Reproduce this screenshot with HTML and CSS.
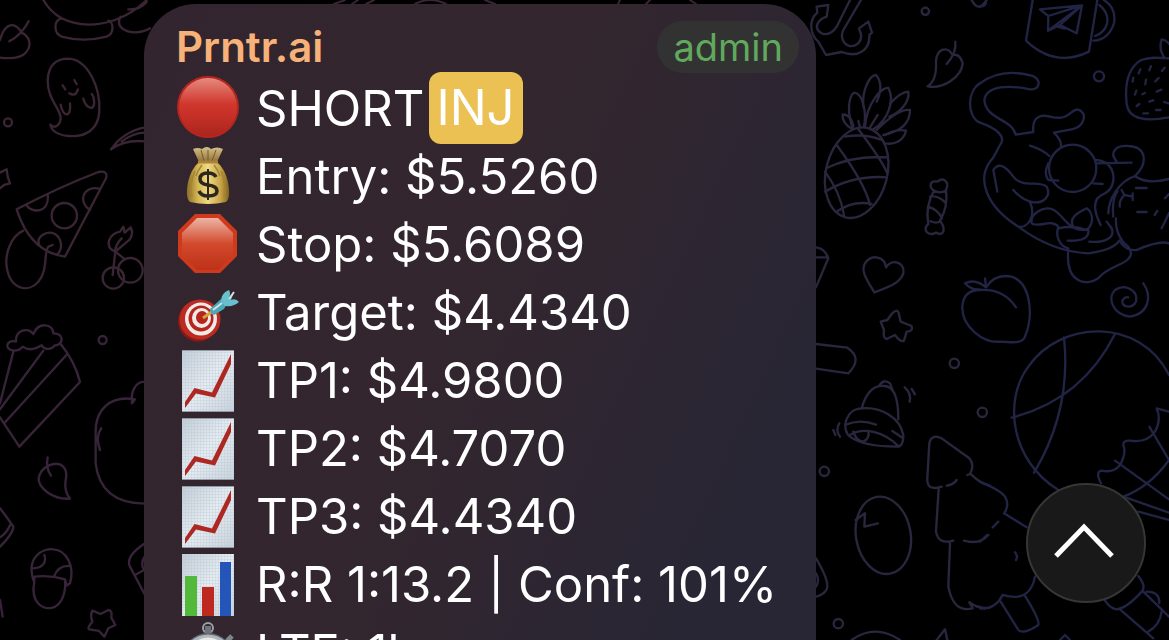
FILE: index.html
```html
<!DOCTYPE html>
<html lang="en">
<head>
  <meta charset="UTF-8" />
  <meta name="viewport" content="width=device-width, initial-scale=1.0"/>
  <title>Prntr.ai</title>
  <link rel="stylesheet" href="styles.css">
</head>
<body>

<!-- Wallpaper doodles -->
<svg class="wallpaper" viewBox="0 0 1169 640" preserveAspectRatio="xMinYMin slice" aria-hidden="true">
  <!-- left, top -->
  <g class="doodle plum" transform="scale(.3333)">
    <path d="M130 0Q150 35 185 55Q255 90 345 60Q400 40 440 0M185 55C160 60 160 100 185 110Q250 128 320 110C345 100 340 65 325 62M362 50C345 80 375 98 410 97Q435 95 450 85M385 28Q420 30 440 5"/>
    <path d="M0 120C15 65 45 65 65 98C90 110 95 135 80 155Q60 180 0 173M28 124Q65 105 86 64"/>
    <path d="M151 374C165 388 182 375 182 352C178 320 143 300 143 240C146 190 175 176 205 176C262 178 302 260 298 335C295 390 255 412 205 408C175 405 155 395 151 374ZM188 256L196 268M223 240L230 252M208 280Q226 292 234 268M182 314C188 352 215 355 210 310M250 296C258 330 292 338 280 290L275 282"/>
    <circle cx="24" cy="367" r="12"/>
    <path d="M333 448Q370 395 435 382M333 448Q375 418 435 424M365 425Q400 398 435 398"/>
    <path d="M0 518L20 508L23 530L30 550L12 555L0 565"/>
    <path d="M50 628Q180 560 295 516Q325 510 318 535L195 770Q90 755 50 628ZM78 614C95 642 150 640 143 583M300 566C245 555 235 610 270 630M119 738C105 710 140 690 165 702C185 715 190 745 172 763"/>
    <circle cx="193" cy="647" r="38"/>
    <path d="M70 692C30 710 15 765 20 800C30 870 85 880 115 845C145 810 130 760 145 740L158 735"/>
    <path d="M338 825L346 755Q320 745 328 720Q335 700 360 695L370 680L374 698L392 682Q402 700 388 720L346 755Q345 735 365 715M346 755L375 778"/>
    <circle cx="340" cy="834" r="32"/><circle cx="391" cy="811" r="37"/>
  </g>
  <!-- left, bottom -->
  <g class="doodle mauve" transform="translate(0 320) scale(.3333)">
    <path d="M42 92C10 90 20 55 48 65C45 30 85 20 100 42C115 5 160 10 160 40C195 40 190 75 165 76C150 95 130 85 125 76C95 95 75 85 68 80Q60 92 42 92ZM40 95L0 250M130 92L0 268M200 104L16 306M182 72Q225 125 240 186L58 380L0 292"/>
    <circle cx="308" cy="60" r="12"/>
    <path d="M435 185C405 185 392 215 396 250L405 238C330 225 285 270 287 340V430C295 500 335 550 435 551M304 325Q285 350 300 390"/>
    <path d="M143 412Q137 445 153 467M145 437C185 420 205 445 197 480Q192 515 210 536C160 540 115 505 116 475Q120 450 145 437"/>
    <path d="M0 565Q20 590 40 620Q40 640 0 680M32 612Q20 640 0 652"/>
    <path d="M102 785C75 710 130 685 160 688C200 690 225 740 210 790L200 797L195 778Q150 765 104 770ZM103 785C90 850 130 868 155 864C190 855 198 810 195 780M98 745C130 745 140 725 133 705M162 770Q175 735 210 738"/>
    <path d="M277 872L302 882L325 870Q338 870 334 893L346 915L325 925L313 950L297 933L268 928Q260 925 277 905Q270 885 277 872Z"/>
    <path d="M435 670Q375 710 390 740L435 825M435 708Q420 730 432 750L405 765M0 840L8 890"/>
  </g>
  <!-- thin strip above the bubble -->
  <g class="doodle strip">
    <path d="M334 4L345 0M352 4L358 0M366 4L374 0M415 4Q430 -4 446 4M485 0L495 4M620 0L618 4M650 0L646 4M690 0L696 4"/>
  </g>
  <!-- right of the bubble, top -->
  <g class="doodle violet" transform="translate(810 0) scale(.3333)">
    <path d="M120 0L80 80Q60 110 35 100C10 85 20 60 50 50L55 15L20 20L22 38C-5 60 0 105 25 125L48 165L95 156C145 175 180 150 178 105L186 98L175 65L147 85L153 103C155 130 135 140 118 138C95 130 92 105 100 90L153 0"/>
    <circle cx="346" cy="34" r="11"/>
    <path d="M485 0Q505 40 530 0"/>
    <path d="M410 192Q440 160 436 125M428 165C410 135 380 148 378 185C380 220 375 245 353 259C400 268 455 230 458 190Q450 160 428 165"/>
    <ellipse cx="140" cy="518" rx="92" ry="138" transform="rotate(14 140 518)"/>
    <path d="M130 388C110 340 115 290 132 278C160 280 170 340 162 380M160 320C155 270 180 225 198 225C220 250 210 285 200 305M165 380C170 310 215 260 235 264C255 300 235 360 190 388M240 310Q275 275 295 275C300 310 265 340 238 350M200 390Q265 325 300 330C300 370 270 395 220 405M225 405Q260 385 288 392C280 425 250 435 225 430M128 388Q95 370 98 343Q125 345 130 380M145 363L150 382M203 345L180 382"/>
    <path d="M80 435Q165 550 180 615M145 388Q215 480 232 520M45 515Q90 575 102 645M105 410Q165 400 215 420M48 505Q130 465 233 472M45 575Q130 525 230 532M80 635Q130 600 185 612"/>
    <path d="M372 572C355 560 360 540 382 545C400 530 420 545 408 570Q415 620 390 662C410 690 400 710 378 698C355 710 335 690 355 672Q345 620 372 572ZM372 572Q392 582 406 572M360 590Q385 585 406 608M355 620Q385 630 396 655M362 664Q378 672 392 664"/>
    <path d="M193 877C175 845 150 815 165 790C185 760 225 770 228 802C245 775 285 785 280 820C270 850 235 862 193 877Z"/>
    <path d="M18 742Q45 745 55 775L18 862M18 772H52"/>
  </g>
  <!-- far right, top -->
  <g class="doodle navy" transform="translate(980 0) scale(.3333)">
    <path d="M158 0L138 122Q225 205 327 155L352 0M372 0Q410 25 402 70Q385 120 340 122M358 15Q390 40 380 75Q370 100 345 108M180 28L306 16L290 100L240 75L204 92L205 48ZM205 48L306 16L240 75M204 92L306 16M232 80L255 86"/>
    <circle cx="357" cy="229" r="15"/>
    <path d="M567 175C535 172 505 170 480 182C440 210 435 265 440 310C445 360 500 365 567 352M555 175Q535 150 545 118Q560 120 567 132M476 220l5-12M508 211l5-12M546 213l8-10M458 245l2-12M496 253l2-14M526 244l10-10M465 284l4-12M487 283l8-4M530 275l14-6M470 318l8-6M508 305l12-4M490 340h14M528 330h14M553 306l12 4"/>
    <path d="M0 250C60 205 130 220 158 228C185 240 180 270 150 268C90 255 20 255 13 300C18 360 95 355 107 404L160 396C155 350 180 340 220 352C270 360 270 330 292 328C325 335 315 380 275 388L222 398Q245 420 243 440M0 250C-40 275 -40 350 0 368C50 385 80 410 60 435C45 460 45 470 30 485C-10 540 20 620 115 680Q215 755 325 760Q400 750 418 722M150 437Q190 450 208 468"/>
    <path d="M52 575L40 510C60 480 85 510 100 530C125 565 180 540 200 560C215 590 190 610 160 607Q125 600 100 570M150 607C170 650 140 685 118 680M155 670C150 640 190 620 215 627C250 640 260 690 310 690C340 690 345 640 320 625C290 640 265 655 280 680M155 670C175 685 215 655 235 680C225 710 240 740 265 745M235 685Q280 675 320 690M263 722Q330 725 325 690M328 725C380 730 405 710 395 685L380 665M265 750C255 850 320 860 355 835C385 795 450 795 453 760Q450 740 432 730Q405 695 408 655"/>
    <circle cx="278" cy="505" r="71"/>
    <path d="M205 490Q190 520 205 540L235 542M345 480C410 480 415 560 375 580C330 595 345 640 362 675M340 550L368 552M350 490L455 488M410 485C385 455 410 435 445 438C500 440 505 490 465 528C415 545 385 600 385 640M465 528Q500 555 567 537M418 722Q440 755 470 750Q540 720 567 730M400 650Q395 600 412 575M425 570L433 585L457 590M458 580V600M433 585Q415 605 420 620M468 564H500M472 636H500M524 645L532 633M555 595L567 582M545 685Q560 655 567 640"/>
    <path d="M490 850C515 885 510 940 450 950C400 945 380 895 405 870C435 850 475 870 468 905C455 930 420 920 428 900Q435 890 445 892"/>
    <path d="M-45 850Q-15 835 18 862Q45 820 95 830C155 850 160 950 135 1010C125 1035 90 1025 60 1025C10 1030 -55 980 -53 920Q-50 870 0 870Q70 865 108 922M18 862L15 835M-45 850Q-25 872 0 868"/>
    <path d="M0 20Q20 20 18 0"/>
  </g>
  <!-- right of the bubble, bottom -->
  <g class="doodle violet" transform="translate(810 320) scale(.3333)">
    <path d="M222 30L212 5L232 0L245 -18Q260 -35 266 -22L272 5L305 18Q310 35 290 35L282 62Q272 68 255 45L230 57Q218 55 222 30Z"/>
    <path d="M18 72L112 83Q160 115 115 160L18 146"/>
    <circle cx="433" cy="130" r="14"/><circle cx="517" cy="277" r="14"/><circle cx="43" cy="454" r="14"/><circle cx="85" cy="911" r="14"/>
    <path d="M155 265Q175 195 220 198Q265 195 265 298M207 198Q220 175 240 190L247 208M155 265C210 260 270 290 280 345Q280 380 262 380Q160 380 120 350C90 325 110 265 155 265M105 315Q150 295 198 314M120 345C160 320 220 335 265 378M130 335Q140 365 160 365Q180 355 175 333M247 333L275 352M284 202Q305 220 299 245M305 207L315 223M88 310Q75 330 90 350M70 330L76 345"/>
    <ellipse cx="220" cy="646" rx="82" ry="117" transform="rotate(-10 220 646)"/>
    <path d="M137 600L165 580L163 620L204 610"/>
    <path d="M395 500Q350 515 352 475L358 370Q365 340 395 355L478 415Q495 435 480 462L472 465M410 497Q430 495 440 480M386 508L378 635Q385 675 430 662M462 662Q510 675 535 645M480 460Q510 490 540 498M420 670L415 800Q430 880 488 865L478 847Q510 870 540 862"/>
    <path d="M18 715Q60 785 50 808Q40 825 18 830M18 760Q30 780 18 800M125 960Q195 910 270 960M380 960L405 928L412 960"/>
  </g>
  <!-- far right, bottom -->
  <g class="doodle navy" transform="translate(980 320) scale(.3333)">
    <path d="M235 510C90 420 70 240 145 140C240 0 480 -10 567 165M252 52Q275 270 162 458M405 42Q305 240 95 293"/>
    <path d="M363 490Q345 455 365 452Q400 460 420 435Q440 400 430 375Q430 360 450 362Q500 370 525 335Q545 300 530 265L567 275M405 422L567 538M508 320L567 420Q510 500 430 530L567 578M475 575L567 600"/>
    <path d="M0 485Q60 510 75 530Q90 555 72 580L140 622M55 605L38 622M22 645L0 665M105 697Q115 710 108 720M0 865Q45 870 68 825Q150 850 165 770M62 845L115 930Q130 945 175 915Q180 900 135 828M475 768Q500 800 485 815Q440 865 410 868Q390 865 375 842M420 868L520 955M490 815L567 890M545 875Q540 915 505 935M500 815Q540 815 538 850M240 960L255 945L270 960"/>
  </g>
</svg>

<!-- Shared chart emoji -->
<svg class="defs" aria-hidden="true">
  <defs>
    <linearGradient id="paper" x1="0" y1="0" x2="1" y2="1">
      <stop offset="0" stop-color="#c3ccd6"/><stop offset=".5" stop-color="#e6edf2"/><stop offset="1" stop-color="#c9d2db"/>
    </linearGradient>
    <pattern id="grid" width="3" height="3" patternUnits="userSpaceOnUse">
      <path d="M0 0H3M0 0V3" stroke="#b4c3cf" stroke-width=".6"/>
    </pattern>
    <symbol id="chart" viewBox="0 0 64 68">
      <path fill="url(#paper)" d="M6 4H58V66H6Z"/>
      <path fill="url(#grid)" d="M6 4H58V66H6Z"/>
      <path fill="none" stroke="#8f9aa5" d="M6 4.500H58M6 65.500H58"/>
      <path fill="#ad2822" d="M9 56L18.500 42L36 46.500L55 8V18L39 51.500L20 47.500L9 62Z"/>
    </symbol>
  </defs>
</svg>

<main class="chat">
  <article class="message">
    <header class="message-header">
      <h1 class="sender">Prntr.ai</h1>
      <span class="badge">admin</span>
    </header>

    <ul class="signal">
      <li>
        <svg class="emoji" viewBox="0 0 64 68" aria-hidden="true">
          <defs>
            <linearGradient id="red" x1="0" y1="0" x2="0" y2="1">
              <stop offset="0" stop-color="#e58a80"/><stop offset=".2" stop-color="#dc6459"/><stop offset=".45" stop-color="#cf372d"/><stop offset=".65" stop-color="#c63027"/><stop offset="1" stop-color="#a9261e"/>
            </linearGradient>
          </defs>
          <circle cx="32" cy="33" r="31" fill="#b8251d"/>
          <circle cx="32" cy="33" r="29" fill="url(#red)"/>
        </svg>
        <span>SHORT</span><mark class="ticker">INJ</mark>
      </li>
      <li>
        <svg class="emoji" viewBox="0 0 64 68" aria-hidden="true">
          <defs>
            <linearGradient id="gold" x1="0" y1="0" x2="1" y2="0">
              <stop offset="0" stop-color="#8c6d28"/><stop offset=".25" stop-color="#d3b452"/><stop offset=".5" stop-color="#efda83"/><stop offset=".8" stop-color="#c7a446"/><stop offset="1" stop-color="#80621f"/>
            </linearGradient>
            <linearGradient id="cloth" x1="0" y1="0" x2="0" y2="1">
              <stop offset="0" stop-color="#d8c289"/><stop offset="1" stop-color="#8f6f35"/>
            </linearGradient>
          </defs>
          <path fill="url(#cloth)" d="M17 7Q22 5 26 7Q31 3 35 7Q41 4 47 7L41 20H23Z"/>
          <path fill="none" stroke="#765a2b" d="M25 8L28 19M32 8V19M40 8L36 19"/>
          <path fill="url(#gold)" d="M23 20H41Q49 27 52 40Q55 56 50 60Q32 64 14 60Q9 56 12 40Q15 27 23 20Z"/>
          <path fill="none" stroke="#a48435" stroke-width="1.500" d="M19 29Q13 43 16 55M45 29Q51 43 48 55M26 23Q22 28 20 34M38 23Q42 28 44 34"/>
          <path fill="none" stroke="#a9823c" stroke-width="3" d="M22 20H42"/>
          <path fill="none" stroke="#2c261c" stroke-width="3.500" d="M40 35Q38 31 32 31Q24 31 24 37Q24 42 32 43Q41 44 41 49Q41 54 32 54Q25 54 23 49"/>
          <path stroke="#2c261c" stroke-width="2" d="M32 27V58"/>
        </svg>
        <span>Entry: $5.5260</span>
      </li>
      <li>
        <svg class="emoji" viewBox="0 0 64 68" aria-hidden="true">
          <defs>
            <linearGradient id="stop" x1="0" y1="0" x2="0" y2="1">
              <stop offset="0" stop-color="#edb3a4"/><stop offset=".5" stop-color="#d2492c"/><stop offset="1" stop-color="#bd3218"/>
            </linearGradient>
          </defs>
          <path fill="#cf3a1c" d="M19 4H44L61 21V46L44 63H19L2 46V21Z"/>
          <path fill="url(#stop)" d="M21 8H42L57 23V45L42 60H21L6 45V23Z"/>
        </svg>
        <span>Stop: $5.6089</span>
      </li>
      <li>
        <svg class="emoji" viewBox="0 0 64 68" aria-hidden="true">
          <ellipse cx="22" cy="43" rx="20" ry="20.500" fill="#8d1814"/>
          <ellipse cx="24" cy="41.500" rx="20.500" ry="20" fill="#bd2a22"/>
          <ellipse cx="25" cy="41" rx="16" ry="16.500" fill="#f0eae6"/>
          <ellipse cx="25" cy="40.500" rx="12.500" ry="13" fill="#b7241e"/>
          <ellipse cx="25.500" cy="40" rx="9.500" ry="10" fill="#f0eae6"/>
          <ellipse cx="26" cy="39.500" rx="6" ry="6.500" fill="#b7241e"/>
          <path stroke="#d0a63a" stroke-width="3" d="M27 40L37 33"/>
          <path fill="#4aa9b8" d="M34 31L45 21L53 22L48 31L38 37Q34 36 34 31Z"/>
          <path fill="#67c0cc" d="M45 23Q45 15 53 12Q55 15 53 20L58 14L55 22Q60 20 63 24Q58 29 49 28Z"/>
          <path fill="none" stroke="#d6dfe2" stroke-width="2" d="M53 21L58 14M37 32L46 25"/>
        </svg>
        <span>Target: $4.4340</span>
      </li>
      <li>
        <svg class="emoji" viewBox="0 0 64 68" aria-hidden="true"><use href="#chart"/></svg>
        <span>TP1: $4.9800</span>
      </li>
      <li>
        <svg class="emoji" viewBox="0 0 64 68" aria-hidden="true"><use href="#chart"/></svg>
        <span>TP2: $4.7070</span>
      </li>
      <li>
        <svg class="emoji" viewBox="0 0 64 68" aria-hidden="true"><use href="#chart"/></svg>
        <span>TP3: $4.4340</span>
      </li>
      <li>
        <svg class="emoji" viewBox="0 0 64 68" aria-hidden="true">
          <path fill="url(#paper)" d="M6 4H58V66H6Z"/>
          <path fill="url(#grid)" d="M6 4H58V66H6Z"/>
          <path fill="#52b93b" d="M9 26H21V66H9Z"/>
          <path fill="#bd281f" d="M26 37H38V66H26Z"/>
          <path fill="#2455b8" d="M44 12H55V66H44Z"/>
        </svg>
        <span>R:R 1:13.2 | Conf: 101%</span>
      </li>
      <li>
        <svg class="emoji" viewBox="0 0 64 68" aria-hidden="true">
          <circle cx="32" cy="10" r="5" fill="none" stroke="#98a0a8" stroke-width="2"/>
          <path fill="#6d747c" d="M29 8H35V16H29Z"/>
          <path stroke="#7d858d" stroke-width="5" d="M51 23L56 18"/>
          <circle cx="32" cy="41" r="26" fill="#5d666f"/>
          <circle cx="32" cy="41" r="24.500" fill="#aeb6bd"/>
          <circle cx="32" cy="41" r="21.500" fill="#ece9df"/>
          <path stroke="#39393b" stroke-width="2" d="M32 41V22"/>
        </svg>
        <span>LTF: 1h</span>
      </li>
    </ul>
  </article>
</main>

<button class="scroll-button" type="button" aria-label="Scroll up">
  <svg viewBox="0 0 64 40" aria-hidden="true">
    <path d="M2 33L30 4L58 33"/>
  </svg>
</button>

</body>
</html>
```

FILE: styles.css
```css
* { box-sizing: border-box; }

body {
  margin: 0;
  height: 100vh;
  overflow: hidden;
  background: #000;
  color: #fff;
  font-family: Inter, "Liberation Sans", sans-serif;
}

.wallpaper {
  position: fixed;
  inset: 0;
  width: 100%;
  height: 100%;
}

.doodle {
  fill: none;
  stroke-width: 7;
  stroke-linecap: round;
  stroke-linejoin: round;
}

.plum { stroke: #3a2534; }
.mauve { stroke: #38243a; }
.violet { stroke: #2b263d; }
.navy { stroke: #212444; }
.strip { stroke: #3a2534; stroke-width: 2; }

.defs {
  position: absolute;
  width: 0;
  height: 0;
}

.chat {
  position: relative;
  padding: 4px 30% 0 144px;
}

.message {
  width: max-content;
  min-width: 672px;
  padding: 17px 17px 32px 32px;
  border-radius: 52px;
  background: linear-gradient(115deg, #33252f 0%, #33262e 45%, #282635 85%);
}

.message-header {
  display: flex;
  justify-content: space-between;
  align-items: center;
  margin-bottom: 1px;
}

.sender {
  margin: 0;
  color: #f6b278;
  font-size: 42px;
  font-weight: 600;
  line-height: 52px;
}

.badge {
  padding: 0 16px;
  border-radius: 26px;
  background: #323232;
  color: #61a95d;
  font-size: 38px;
  line-height: 52px;
}

.signal {
  margin: 0;
  padding: 0;
  list-style: none;
  font-size: 49px;
  line-height: 68px;
}

.signal li {
  display: flex;
  align-items: center;
  height: 68px;
  white-space: nowrap;
}

.signal span {
  padding-top: 2px;
}

.emoji {
  flex: none;
  width: 64px;
  height: 68px;
  margin-right: 16px;
}

.ticker {
  margin-left: 4px;
  padding: 0 8px;
  border-radius: 12px;
  background: #ebc153;
  color: #fff;
  line-height: 72px;
}

.scroll-button {
  position: fixed;
  right: 23px;
  bottom: 37px;
  display: flex;
  justify-content: center;
  align-items: center;
  width: 120px;
  height: 120px;
  padding: 0;
  border: 2px solid #363636;
  border-radius: 50%;
  background: #191919;
  cursor: pointer;
}

.scroll-button svg {
  width: 64px;
  fill: none;
  stroke: #fff;
  stroke-width: 5;
}
```
